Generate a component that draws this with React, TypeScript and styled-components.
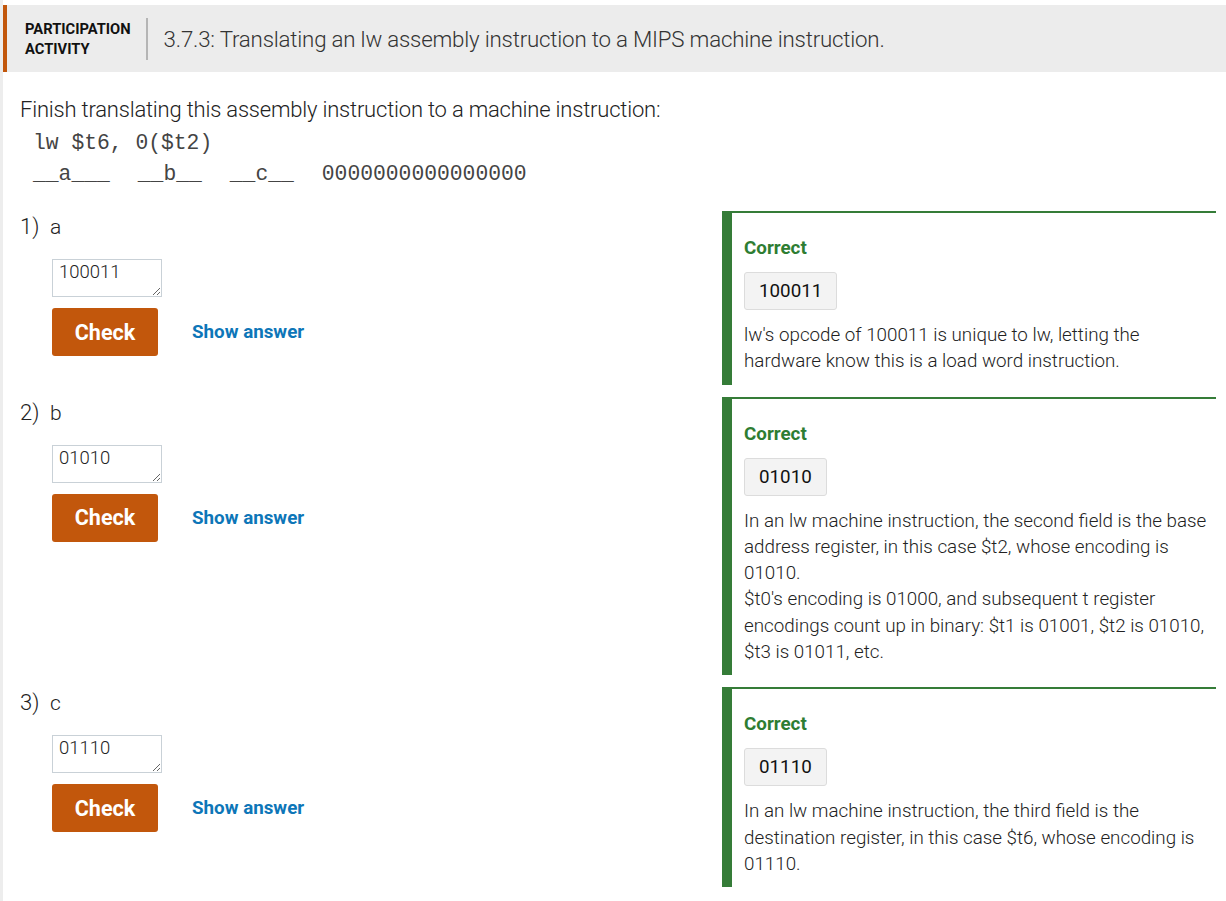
import React from "react";
import styled, { createGlobalStyle } from "styled-components";

const Global = createGlobalStyle`
  html, body { margin: 0; padding: 0; background: #fff; }
  body { font-family: Roboto, "Noto Sans", sans-serif; color: #222; }
`;

const Page = styled.div`
  border-left: 3px solid #ededed;
  padding-top: 5px;
  min-height: 896px;
`;

const Header = styled.header`
  display: flex;
  align-items: center;
  height: 67px;
  background: #ececec;
  border-left: 4px solid #c2570c;
  padding-left: 18px;
`;

const Kind = styled.div`
  font-family: Roboto, sans-serif;
  font-weight: 700;
  font-size: 14.7px;
  line-height: 20px;
  color: #111;
  text-transform: uppercase;
  padding-right: 15px;
  border-right: 2px solid #b5b5b5;
  height: 42px;
  display: flex;
  flex-direction: column;
  justify-content: center;
`;

const Title = styled.h1`
  margin: 0 0 0 16px;
  font-family: Roboto, sans-serif;
  font-weight: 300;
  font-size: 22.3px;
  color: #333;
  letter-spacing: -0.2px;
`;

const Body = styled.main`
  padding: 22px 10px 0 17px;
`;

const Intro = styled.p`
  margin: 0;
  font-weight: 300;
  font-size: 22px;
  line-height: 32px;
  color: #222;
  letter-spacing: -0.2px;
`;

const Code = styled.pre`
  margin: 2px 0 0 13px;
  font-family: "Liberation Mono", "DejaVu Sans Mono", monospace;
  font-size: 21.33px;
  line-height: 31px;
  color: #444;
  white-space: pre;
`;

const Gap = styled.span`
  display: inline-block;
  width: 28px;
`;

const Questions = styled.div`
  margin-top: 21px;
  display: flex;
  flex-direction: column;
  gap: 12px;
`;

const Row = styled.section`
  display: grid;
  grid-template-columns: 1fr 494px;
`;

const Question = styled.div`
  padding-top: 3px;
`;

const Label = styled.div`
  display: flex;
  align-items: baseline;
  font-weight: 300;
  font-size: 22px;
  line-height: 26px;
  color: #222;
`;

const Num = styled.span`
  width: 30px;
`;

const Letter = styled.span`
  font-size: 21px;
`;

const Inputs = styled.div`
  margin: 19px 0 0 32px;
  display: flex;
  flex-direction: column;
  gap: 11px;
`;

const Answer = styled.textarea`
  box-sizing: border-box;
  width: 110px;
  height: 38px;
  border: 1px solid #c9d1d7;
  border-radius: 0;
  padding: 1px 6px;
  font-family: Roboto, sans-serif;
  font-weight: 300;
  font-size: 18.5px;
  line-height: 22px;
  color: #222;
  background: #fff;
  outline: none;
`;

const Actions = styled.div`
  display: flex;
  align-items: center;
  gap: 34px;
`;

const CheckButton = styled.button`
  width: 106px;
  height: 48px;
  border: none;
  border-radius: 3px;
  background: #c2570c;
  color: #fff;
  font-family: Roboto, sans-serif;
  font-weight: 700;
  font-size: 21.5px;
  cursor: pointer;
`;

const ShowAnswer = styled.button`
  border: none;
  background: none;
  padding: 0;
  color: #0d76b8;
  font-family: Roboto, sans-serif;
  font-weight: 700;
  font-size: 18.8px;
  cursor: pointer;
`;

const Feedback = styled.div`
  border-top: 2px solid #357c38;
  border-left: 10px solid #357c38;
  padding: 22px 6px 10px 12px;
`;

const Correct = styled.div`
  color: #2e7d32;
  font-weight: 700;
  font-size: 18.8px;
  line-height: 26px;
`;

const Given = styled.div`
  display: inline-block;
  margin-top: 11px;
  padding: 0 14px;
  height: 38px;
  line-height: 36px;
  box-sizing: border-box;
  background: #f3f3f3;
  border: 1px solid #dcdcdc;
  border-radius: 3px;
  font-size: 18.8px;
  font-weight: 400;
  color: #111;
`;

const Explain = styled.p`
  margin: 12px 0 0;
  font-weight: 300;
  font-size: 18.8px;
  line-height: 26.3px;
  color: #222;
`;

type Q = { n: number; letter: string; value: string; explain: string[] };

const questions: Q[] = [
  {
    n: 1,
    letter: "a",
    value: "100011",
    explain: ["lw's opcode of 100011 is unique to lw, letting the hardware know this is a load word instruction."],
  },
  {
    n: 2,
    letter: "b",
    value: "01010",
    explain: [
      "In an lw machine instruction, the second field is the base address register, in this case $t2, whose encoding is 01010.",
      "$t0's encoding is 01000, and subsequent t register encodings count up in binary: $t1 is 01001, $t2 is 01010, $t3 is 01011, etc.",
    ],
  },
  {
    n: 3,
    letter: "c",
    value: "01110",
    explain: ["In an lw machine instruction, the third field is the destination register, in this case $t6, whose encoding is 01110."],
  },
];

const fields = ["__a___", "__b__", "__c__", "0000000000000000"];

export default function App() {
  return (
    <Page>
      <Global />
      <Header>
        <Kind>
          <span>Participation</span>
          <span>Activity</span>
        </Kind>
        <Title>3.7.3: Translating an lw assembly instruction to a MIPS machine instruction.</Title>
      </Header>
      <Body>
        <Intro>Finish translating this assembly instruction to a machine instruction:</Intro>
        <Code>
          {"lw $t6, 0($t2)\n"}
          {fields.map((f, i) => (
            <React.Fragment key={f}>
              {i > 0 && <Gap />}
              {f}
            </React.Fragment>
          ))}
        </Code>
        <Questions>
          {questions.map((q) => (
            <Row key={q.n}>
              <Question>
                <Label>
                  <Num>{q.n})</Num>
                  <Letter>{q.letter}</Letter>
                </Label>
                <Inputs>
                  <Answer readOnly value={q.value} />
                  <Actions>
                    <CheckButton>Check</CheckButton>
                    <ShowAnswer>Show answer</ShowAnswer>
                  </Actions>
                </Inputs>
              </Question>
              <Feedback>
                <Correct>Correct</Correct>
                <Given>{q.value}</Given>
                <Explain>
                  {q.explain.map((e, i) => (
                    <React.Fragment key={i}>
                      {i > 0 && <br />}
                      {e}
                    </React.Fragment>
                  ))}
                </Explain>
              </Feedback>
            </Row>
          ))}
        </Questions>
      </Body>
    </Page>
  );
}
